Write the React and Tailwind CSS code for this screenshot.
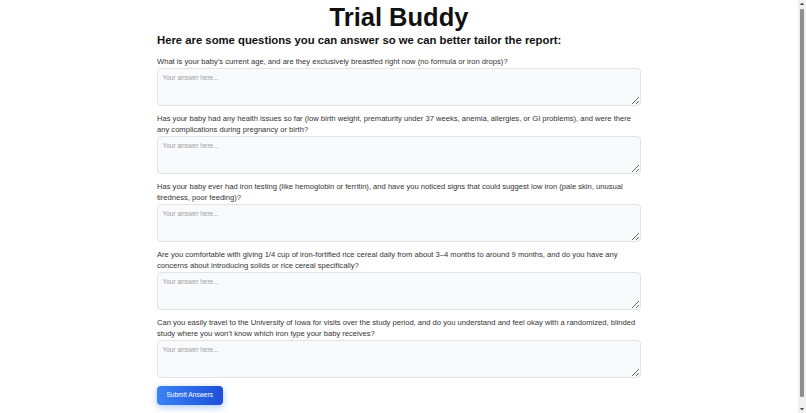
const questions = [
  'What is your baby\u2019s current age, and are they exclusively breastfed right now (no formula or iron drops)?',
  'Has your baby had any health issues so far (low birth weight, prematurity under 37 weeks, anemia, allergies, or GI problems), and were there any complications during pregnancy or birth?',
  'Has your baby ever had iron testing (like hemoglobin or ferritin), and have you noticed signs that could suggest low iron (pale skin, unusual tiredness, poor feeding)?',
  'Are you comfortable with giving 1/4 cup of iron-fortified rice cereal daily from about 3\u20134 months to around 9 months, and do you have any concerns about introducing solids or rice cereal specifically?',
  'Can you easily travel to the University of Iowa for visits over the study period, and do you understand and feel okay with a randomized, blinded study where you won\u2019t know which iron type your baby receives?',
];

// the reference shows the browser's classic scrollbar, drawn here as a strip
function Scrollbar() {
  return (
    <div className="flex w-[8px] flex-col items-center bg-[#f1f1f1]">
      <svg width="8" height="8" viewBox="0 0 8 8" className="shrink-0">
        <path d="M4 2.5 L6.2 5 L1.8 5 Z" fill="#505050" />
      </svg>
      <div className="mb-[8px] mt-[1px] w-[4px] flex-1 rounded-[1px] bg-[#8f8f8f]" />
      <svg width="8" height="8" viewBox="0 0 8 8" className="shrink-0">
        <path d="M4 5.5 L6.2 3 L1.8 3 Z" fill="#505050" />
      </svg>
    </div>
  );
}

export default function App() {
  return (
    <div className="flex h-screen overflow-hidden bg-white font-['Liberation_Sans',Arial,sans-serif] text-[#222]">
      <main className="flex-1 overflow-hidden">
        <div className="mx-auto w-[484px] pb-[24px]">
          <h1 className="pt-[2px] text-center text-[25.5px] font-bold leading-[30px] text-[#111]">Trial Buddy</h1>
          <h2 className="mt-[2px] text-[11.3px] font-bold leading-[13px] text-[#111]">
            Here are some questions you can answer so we can better tailor the report:
          </h2>
          <form className="mt-[9px] flex flex-col">
            {questions.map((q, i) => (
              <div key={i} className="mb-[7px]">
                <label className="block text-[7.6px] leading-[11.5px] text-[#333]">{q}</label>
                <textarea
                  placeholder="Your answer here..."
                  className="mt-[0.5px] block h-[37.5px] w-full resize-y rounded-[4px] border border-[#e1e3e7] bg-[#f9fafb] px-[4.5px] py-[4.5px] text-[6.5px] leading-[8px] placeholder:text-[#9a9ea6] outline-none"
                />
              </div>
            ))}
            <button
              type="button"
              className="mt-[1px] block h-[19px] self-start rounded-[4px] bg-gradient-to-r from-[#3b82f6] to-[#1d4ed8] px-[9.5px] text-[6.5px] text-white shadow-[0_2px_7px_rgba(59,130,246,0.45)]"
            >
              Submit Answers
            </button>
          </form>
        </div>
      </main>
      <Scrollbar />
    </div>
  );
}
